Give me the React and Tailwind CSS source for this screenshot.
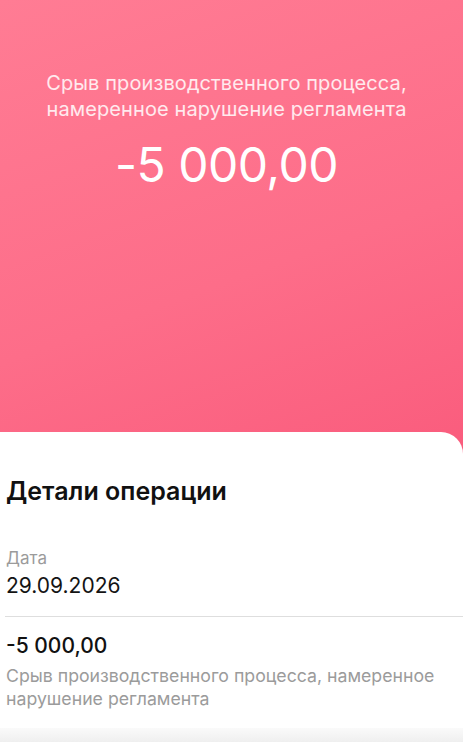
export default function App() {
  return (
    <div
      className="relative w-[463px] h-[742px] overflow-hidden flex flex-col bg-[linear-gradient(160deg,#ff7c94_0%,#fd6d89_40%,#f9587a_75%,#f9597a_100%)]"
      style={{ fontFamily: 'Inter, "Noto Sans", sans-serif' }}
    >
      <div className="h-[432px] shrink-0 flex flex-col items-center pt-[70px] pr-[10px]">
        <p className="text-center text-[20px] leading-[26px] text-white/85 tracking-[0.1px]">
          Срыв производственного процесса,
          <br />
          намеренное нарушение регламента
        </p>
        <p className="mt-[17px] text-[48px] leading-[52px] text-white font-normal tracking-[-0.5px]">
          -5 000,00
        </p>
      </div>
      <div className="flex-1 bg-white rounded-tr-[22px] pl-[6px] flex flex-col">
        <h2 className="mt-[44px] text-[25px] leading-[30px] font-semibold text-[#111]">
          Детали операции
        </h2>
        <div className="mt-[41px] flex flex-col">
          <span className="text-[17px] leading-[22px] text-[#9b9b9b]">Дата</span>
          <span className="mt-[4px] text-[21px] leading-[26px] text-[#141414]">29.09.2026</span>
        </div>
        <div className="mt-[17px] h-px bg-[#dedede] -mr-[6px] ml-[-1px]" />
        <div className="mt-[16px] flex flex-col">
          <span className="text-[21px] leading-[26px] font-medium text-[#111]">-5 000,00</span>
          <span className="mt-[5px] text-[17.7px] leading-[23px] text-[#9b9b9b]">
            Срыв производственного процесса, намеренное
            <br />
            нарушение регламента
          </span>
        </div>
        <div className="mt-auto h-[14px] bg-[linear-gradient(180deg,#fafafa,#efefef)] -ml-[6px]" />
      </div>
    </div>
  );
}
